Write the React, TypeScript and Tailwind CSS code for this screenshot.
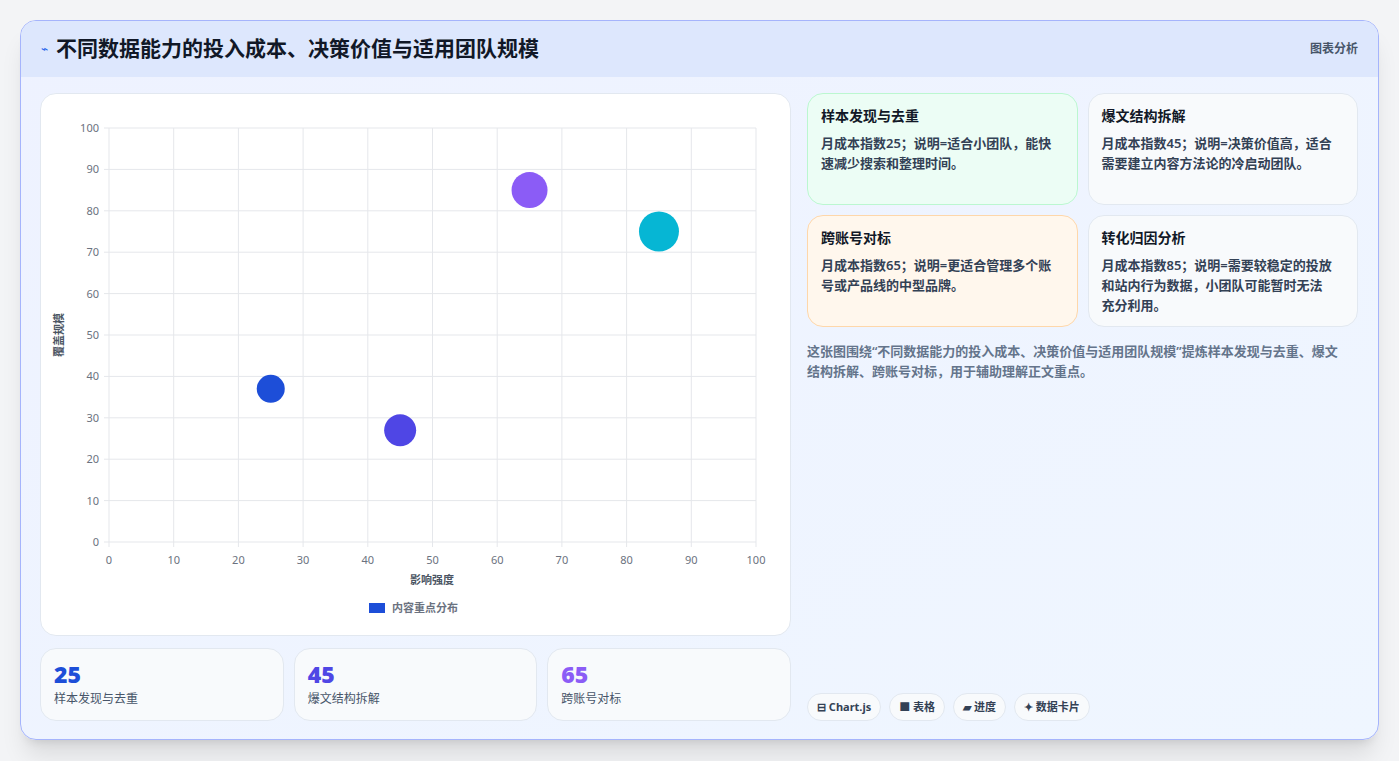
const FONT = { fontFamily: '"Noto Sans", "Noto Sans CJK SC", sans-serif' };

const bubbles = [
  { x: 25, y: 37, r: 14, c: "#1d4ed8" },
  { x: 45, y: 27, r: 16, c: "#4f46e5" },
  { x: 65, y: 85, r: 18, c: "#8b5cf6" },
  { x: 85, y: 75, r: 20, c: "#06b6d4" },
];

function Chart() {
  const x0 = 68, x1 = 715, y0 = 448, y1 = 34;
  const px = (v: number) => x0 + ((x1 - x0) * v) / 100;
  const py = (v: number) => y0 - ((y0 - y1) * v) / 100;
  const ticks = [0, 10, 20, 30, 40, 50, 60, 70, 80, 90, 100];
  return (
    <svg width="750" height="543" className="block">
      {ticks.map((t) => (
        <g key={t}>
          <line x1={px(t)} x2={px(t)} y1={y1} y2={y0 + 5} stroke="#e5e7eb" />
          <line x1={x0 - 5} x2={x1} y1={py(t)} y2={py(t)} stroke="#e5e7eb" />
          <text x={px(t)} y={y0 + 22} fontSize="11" fill="#6b7280" textAnchor="middle">{t}</text>
          <text x={x0 - 10} y={py(t) + 4} fontSize="11" fill="#6b7280" textAnchor="end">{t}</text>
        </g>
      ))}
      <text x={391} y={490} fontSize="11" fontWeight="bold" fill="#4b5563" textAnchor="middle">影响强度</text>
      <text transform="translate(22 241) rotate(-90)" fontSize="11" fontWeight="bold" fill="#4b5563" textAnchor="middle">覆盖规模</text>
      {bubbles.map((b) => (
        <circle key={b.x} cx={px(b.x)} cy={py(b.y)} r={b.r} fill={b.c} />
      ))}
      <rect x={328} y={509} width={16} height={10} fill="#1d4ed8" />
      <text x={351} y={518} fontSize="11" fontWeight="bold" fill="#6b7280">内容重点分布</text>
    </svg>
  );
}

const cards = [
  { t: "样本发现与去重", d: "月成本指数25；说明=适合小团队，能快速减少搜索和整理时间。", cls: "bg-[#ecfdf5] border-[#bbf7d0]" },
  { t: "爆文结构拆解", d: "月成本指数45；说明=决策价值高，适合需要建立内容方法论的冷启动团队。", cls: "bg-[#f8fafc] border-[#e2e8f0]" },
  { t: "跨账号对标", d: "月成本指数65；说明=更适合管理多个账号或产品线的中型品牌。", cls: "bg-[#fff7ed] border-[#fed7aa]" },
  { t: "转化归因分析", d: "月成本指数85；说明=需要较稳定的投放和站内行为数据，小团队可能暂时无法充分利用。", cls: "bg-[#f8fafc] border-[#e2e8f0]" },
];

const stats = [
  { v: "25", l: "样本发现与去重", c: "text-[#1d4ed8]" },
  { v: "45", l: "爆文结构拆解", c: "text-[#4f46e5]" },
  { v: "65", l: "跨账号对标", c: "text-[#8b5cf6]" },
];

export default function App() {
  return (
    <div className="min-h-screen w-[1399px] bg-[#f3f4f6] px-5 pt-5 pb-5" style={FONT}>
      <div className="w-[1359px] h-[720px] rounded-2xl border border-[#a5b4fc] bg-gradient-to-br from-[#eef2ff] to-[#eff6ff] shadow-xl overflow-hidden flex flex-col">
        <div className="h-[56px] bg-[#dde7fd] flex items-center justify-between px-5 shrink-0">
          <div className="flex items-center gap-2">
            <span className="text-[#2563eb] text-xs">⌁</span>
            <span className="text-[21px] font-bold text-[#111827]">不同数据能力的投入成本、决策价值与适用团队规模</span>
          </div>
          <span className="text-xs font-semibold text-[#475569]">图表分析</span>
        </div>
        <div className="flex gap-4 pl-[19px] pr-5 pt-4 flex-1 pb-[18px]">
          <div className="w-[751px] flex flex-col gap-3">
            <div className="h-[543px] rounded-2xl border border-[#e2e8f0] bg-white">
              <Chart />
            </div>
            <div className="grid grid-cols-3 gap-[10px]">
              {stats.map((s) => (
                <div key={s.v} className="h-[73px] rounded-2xl border border-[#e2e8f0] bg-[#f8fafc] px-[13px] pt-[11px]">
                  <div className={`text-[23px] font-black leading-7 ${s.c}`}>{s.v}</div>
                  <div className="text-xs text-[#475569] mt-[3px]">{s.l}</div>
                </div>
              ))}
            </div>
          </div>
          <div className="flex-1 flex flex-col">
            <div className="grid grid-cols-2 gap-x-[10px] gap-y-[10px]">
              {cards.map((c) => (
                <div key={c.t} className={`h-[112px] rounded-2xl border pl-[13px] pr-[24px] pt-[12px] ${c.cls}`}>
                  <div className="text-sm font-bold text-[#111827]">{c.t}</div>
                  <div className="text-[13px] font-semibold text-[#334155] leading-[20px] mt-[7px]">{c.d}</div>
                </div>
              ))}
            </div>
            <p className="text-[13px] font-semibold text-[#64748b] leading-[20px] mt-[14px] pr-2">
              这张图围绕“不同数据能力的投入成本、决策价值与适用团队规模”提炼样本发现与去重、爆文结构拆解、跨账号对标，用于辅助理解正文重点。
            </p>
            <div className="mt-auto flex gap-2">
              {["⊟ Chart.js", "■ 表格", "▰ 进度", "✦ 数据卡片"].map((t) => (
                <span key={t} className="h-[28px] px-[9px] rounded-full bg-[#f8fafc] border border-[#e2e8f0] text-[11px] font-bold text-[#334155] flex items-center">{t}</span>
              ))}
            </div>
          </div>
        </div>
      </div>
    </div>
  );
}
